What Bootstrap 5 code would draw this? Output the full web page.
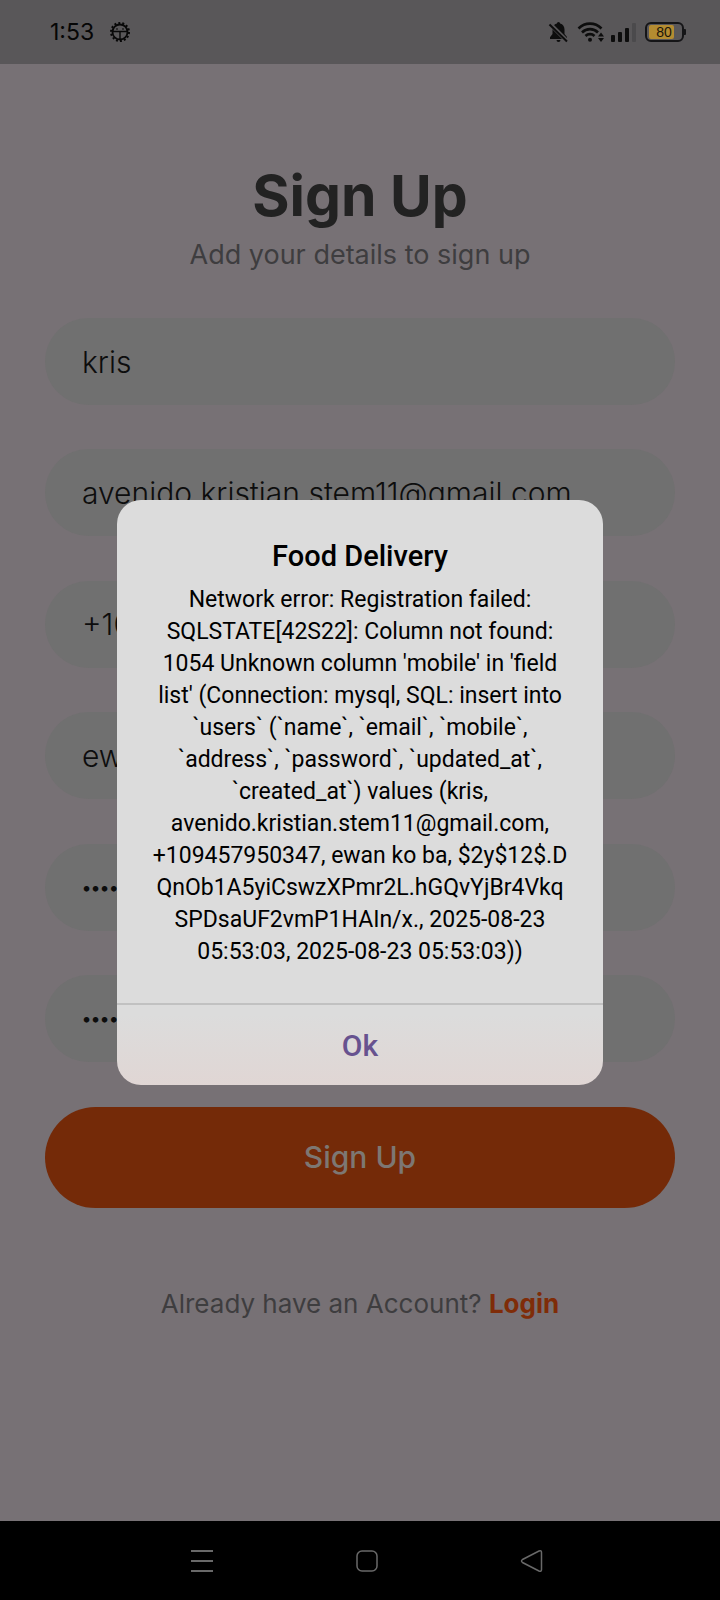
<!DOCTYPE html>
<html lang="en">
<head>
<meta charset="utf-8">
<meta name="viewport" content="width=device-width, initial-scale=1">
<title>Food Delivery - Sign Up</title>
<link href="https://cdn.jsdelivr.net/npm/bootstrap@5.3.0/dist/css/bootstrap.min.css" rel="stylesheet">
<style>
  body { background: #777175; font-family: Inter, "Liberation Sans", sans-serif; color: #0d0d0d; }
  .status-bar { height: 64px; background: #595759; padding: 0 34px 0 50px; }
  .clock { font-size: 23px; line-height: 32px; color: #060606; }
  .screen { padding: 98px 45px 0; }
  .title { font-size: 57px; line-height: 68px; font-weight: 700; color: #222; margin-bottom: 9px; }
  .muted { font-size: 27px; line-height: 32px; color: #3e3d3f; }
  .fields { margin-top: 47px; min-height: 744px; }
  .field { height: 87px; padding: 0 37px; border: 0; border-radius: 44px; background: #707070; color: #0d0d0d; font-size: 30px; font-weight: 300; }
  .field:focus { background: #707070; color: #0d0d0d; box-shadow: none; }
  .secret { font-size: 18px; font-weight: 600; }
  .btn-signup { height: 101px; margin-top: 45px; border: 0; border-radius: 51px; background: #742a08; color: #7d7773; font-size: 30px; font-weight: 500; }
  .login-row { margin-top: 80px; font-size: 26px; }
  .login-row a { color: #7f2c08; font-weight: 700; }
  .dialog { max-width: 486px; border-radius: 24px; background: linear-gradient(#dcdcdc 88%, #e0d6d4); font-family: Roboto, sans-serif; color: #000; }
  .dialog-body { padding: 38px 24px 35px; }
  .dialog-title { font-size: 29px; line-height: 36px; font-weight: 500; margin-bottom: 10px; }
  .dialog-text { font-size: 23px; line-height: 32px; }
  .dialog-ok { height: 82px; border: 0; border-top: 2px solid #c1c1c1; border-radius: 0; color: #67528f; font-size: 30px; font-weight: 500; }
  .nav-keys { height: 79px; padding: 0 176px 0 190px; background: #000; }
  .key { background: none; border: 0; padding: 0; line-height: 0; }
</style>
</head>
<body class="d-flex flex-column min-vh-100">
<header class="status-bar d-flex align-items-center justify-content-between">
  <div class="d-flex align-items-center gap-3">
    <span class="clock">1:53</span>
    <svg width="20" height="20" viewBox="0 0 20 20" fill="none" stroke="#080808" aria-hidden="true">
      <circle cx="10" cy="10" r="9" stroke-width="2" stroke-dasharray="2 2.04"/>
      <circle cx="10" cy="10" r="7.500" stroke-width="1.800"/>
      <path d="M3 9.500h14M10 10v7" stroke-width="1.400"/>
      <path d="M6 7h2M12 7h2" stroke-width="1"/>
    </svg>
  </div>
  <svg width="138" height="22" viewBox="0 0 138 22" aria-hidden="true">
    <g fill="#0d0d0d">
      <path d="M10.500 1a1.600 1.600 0 0 1 1.600 1.600C15 3.400 16.500 5.700 16.500 8.500V13L19 16v2H2v-1.800L4.500 13V8.500C4.500 5.700 6 3.400 8.900 2.600A1.600 1.600 0 0 1 10.500 1zM8.500 19h4a2 2 0 0 1-4 0z"/>
      <circle cx="42" cy="18.700" r="2"/>
      <path d="M50 15.500l3-4 3 4zM50 17l3 4 3-4z"/>
      <rect x="63" y="14" width="4" height="7" rx="1"/>
      <rect x="70" y="11" width="4" height="10" rx="1"/>
      <rect x="77" y="7" width="4" height="14" rx="1"/>
    </g>
    <path d="M2 3l17 17" stroke="#595759" stroke-width="4"/>
    <path d="M1.500 3.500L19 20.500" stroke="#0d0d0d" stroke-width="2"/>
    <g fill="none" stroke="#0d0d0d" stroke-width="2.600">
      <path d="M30.500 7.500C37 1 47 1 53.500 7.500M34 11.500C38.500 7 45.500 7 50 11.500M37.500 15C40 12.500 44 12.500 46.500 15"/>
    </g>
    <rect x="84" y="2" width="4" height="19" rx="1" fill="#4b4a4c"/>
    <rect x="98" y="2" width="37" height="18" rx="5" fill="none" stroke="#151517" stroke-width="2"/>
    <rect x="101" y="4" width="25" height="14" rx="2" fill="#b48c31"/>
    <path d="M136 8h1q1 0 1 1v4q0 1-1 1h-1z" fill="#151517"/>
    <text x="116" y="16" text-anchor="middle" font-family="Liberation Sans, sans-serif" font-size="14" fill="#1b1509">80</text>
  </svg>
</header>

<main class="position-relative flex-grow-1">
  <form class="screen text-center">
    <h1 class="title">Sign Up</h1>
    <p class="muted mb-0">Add your details to sign up</p>
    <div class="fields d-flex flex-column justify-content-between">
      <input class="form-control field" type="text" aria-label="Name" value="kris">
      <input class="form-control field" type="email" aria-label="Email" value="avenido.kristian.stem11@gmail.com">
      <input class="form-control field" type="tel" aria-label="Mobile" value="+109457950347">
      <input class="form-control field" type="text" aria-label="Address" value="ewan ko ba">
      <input class="form-control field secret" type="password" aria-label="Password" value="123456">
      <input class="form-control field secret" type="password" aria-label="Confirm password" value="123456">
    </div>
    <button class="btn btn-signup w-100" type="button">Sign Up</button>
    <p class="muted login-row mb-0">Already have an Account? <a class="text-decoration-none" href="#">Login</a></p>
  </form>

  <div class="position-absolute top-0 start-0 w-100 h-100 d-flex align-items-center justify-content-center">
    <div class="dialog w-100 text-center overflow-hidden" role="alertdialog" aria-labelledby="dialog-title" aria-describedby="dialog-text">
      <div class="dialog-body">
        <h2 class="dialog-title" id="dialog-title">Food Delivery</h2>
        <p class="dialog-text mb-0" id="dialog-text">Network error: Registration failed:<br>SQLSTATE[42S22]: Column not found:<br>1054 Unknown column 'mobile' in 'field<br>list' (Connection: mysql, SQL: insert into<br>`users` (`name`, `email`, `mobile`,<br>`address`, `password`, `updated_at`,<br>`created_at`) values (kris,<br>avenido.kristian.stem11@gmail.com,<br>+109457950347, ewan ko ba, $2y$12$.D<br>QnOb1A5yiCswzXPmr2L.hGQvYjBr4Vkq<br>SPDsaUF2vmP1HAIn/x., 2025-08-23<br>05:53:03, 2025-08-23 05:53:03))</p>
      </div>
      <button class="btn dialog-ok w-100" type="button">Ok</button>
    </div>
  </div>
</main>

<nav class="nav-keys d-flex align-items-center justify-content-between" aria-label="System">
  <button class="key" type="button" aria-label="Recent apps"><svg width="24" height="24" viewBox="0 0 24 24" stroke="#696969" stroke-width="2"><path d="M1 2h22M1 12h22M1 22h22"/></svg></button>
  <button class="key" type="button" aria-label="Home"><svg width="24" height="24" viewBox="0 0 24 24" fill="none" stroke="#696969" stroke-width="1.500"><rect x="2" y="2" width="20" height="20" rx="5"/></svg></button>
  <button class="key" type="button" aria-label="Back"><svg width="24" height="24" viewBox="0 0 24 24" fill="none" stroke="#696969" stroke-width="1.500"><path d="M2.500 10.500L19 2q2.500-1 2.500 1.500v17q0 2.500-2.500 1.500L2.500 13.500q-2-1.500 0-3z"/></svg></button>
</nav>
<script src="https://cdn.jsdelivr.net/npm/bootstrap@5.3.0/dist/js/bootstrap.bundle.min.js"></script>
</body>
</html>
